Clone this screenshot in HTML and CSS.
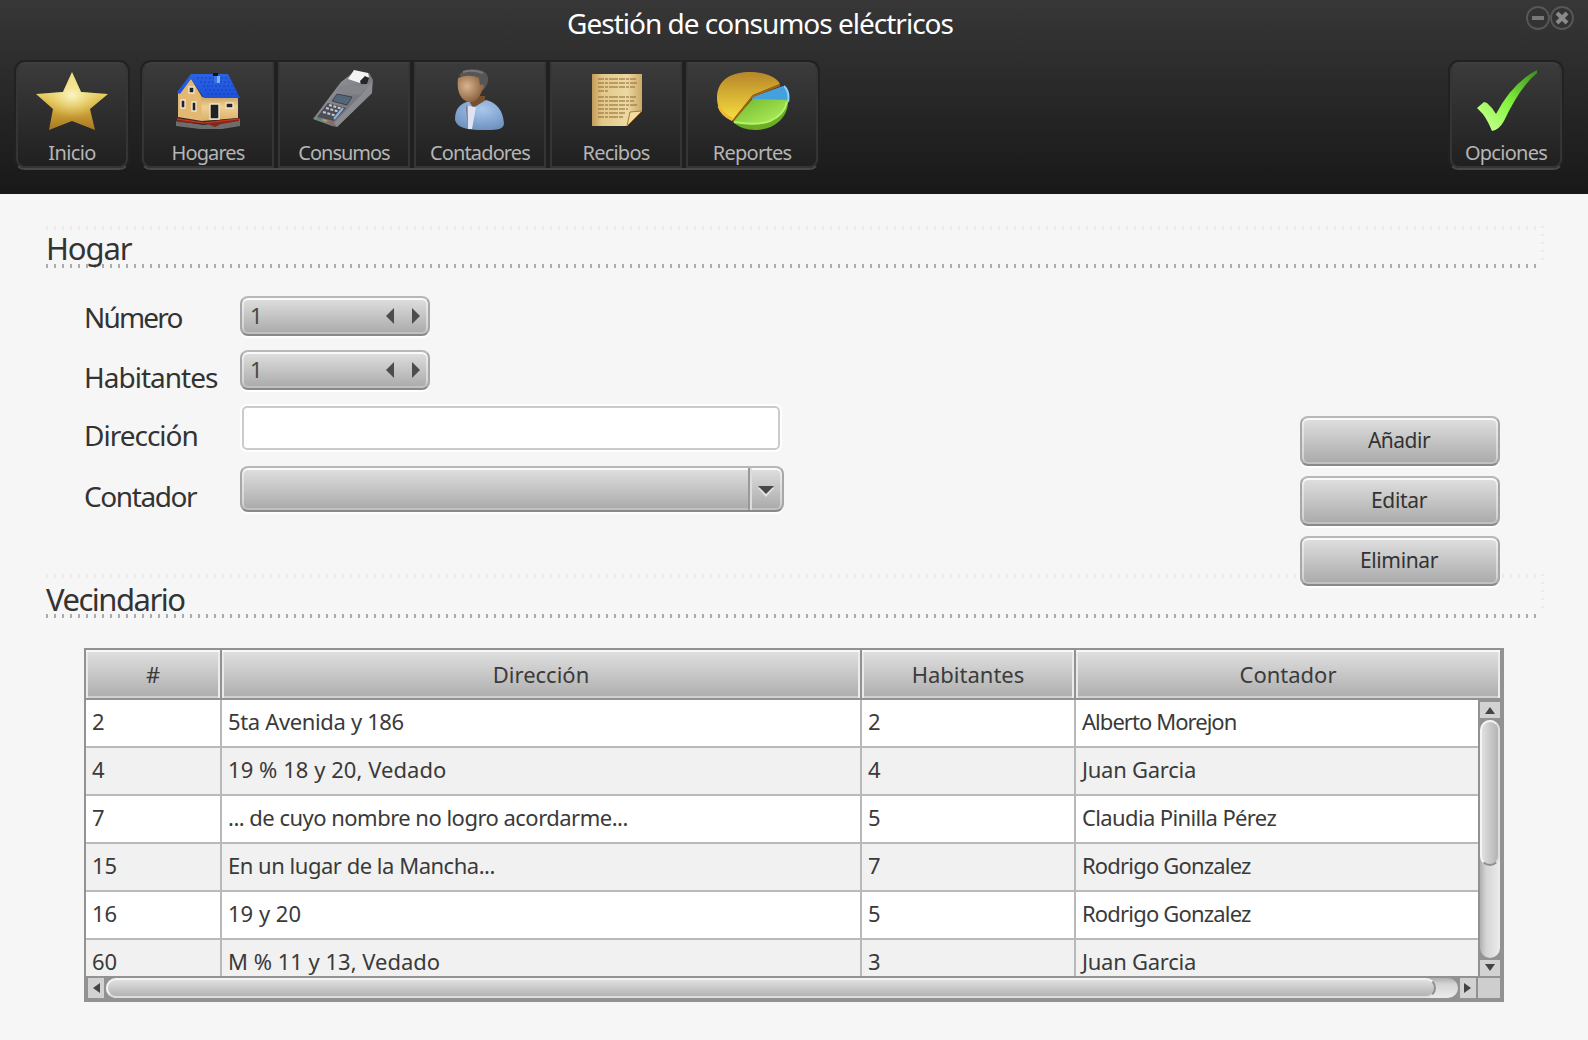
FILE: index.html
```html
<!DOCTYPE html>
<html lang="es">
<head>
<meta charset="utf-8">
<title>Gestión de consumos eléctricos</title>
<link rel="stylesheet" href="styles.css">
</head>
<body>
<header class="header">
  <div class="titlebar">
    <h1 class="title"><span class="t-title">Gestión de consumos eléctricos</span></h1>
    <svg class="controls" width="50" height="26" viewBox="0 0 50 26">
      <g fill="#333" stroke="#585858" stroke-width="1.8"><circle cx="13" cy="13" r="11"/><circle cx="37" cy="13" r="11"/></g>
      <path d="M7 13h12" stroke="#777" stroke-width="4"/>
      <path d="M32 8l10 10M42 8l-10 10" stroke="#8a8a8a" stroke-width="4"/>
    </svg>
  </div>
  <nav class="toolbar">
    <div class="group">
      <a class="tool tool-single">
        <svg width="76" height="66" viewBox="0 0 76 66">
          <defs><linearGradient id="gold" x2="0" y2="1"><stop offset="0" stop-color="#f0e48c"/><stop offset=".35" stop-color="#ecd56a"/><stop offset=".65" stop-color="#cfa638"/><stop offset="1" stop-color="#a97722"/></linearGradient>
          <radialGradient id="shine" cx=".5" cy=".4" r=".4"><stop offset="0" stop-color="#fbf5c4"/><stop offset="1" stop-color="#f3e080" stop-opacity="0"/></radialGradient></defs>
          <path d="M38 4L47 24L74 26L56 41L61 62L38 53L15 62L19 41L2 26L29 24Z" fill="url(#gold)"/>
          <path d="M38 4L47 24L74 26L56 41L61 62L38 53L15 62L19 41L2 26L29 24Z" fill="url(#shine)"/>
        </svg><span class="t-inicio">Inicio</span></a>
    </div>
    <div class="group group-main">
      <a class="tool"><svg width="76" height="66" viewBox="0 0 76 66">
        <defs><linearGradient id="wall" x2="0" y2="1"><stop offset="0" stop-color="#c9a464"/><stop offset=".4" stop-color="#efd092"/><stop offset="1" stop-color="#d9b06c"/></linearGradient><linearGradient id="roof" x2="0" y2="1"><stop offset="0" stop-color="#2b63e2"/><stop offset="1" stop-color="#1c50dc"/></linearGradient></defs>
        <path d="M6 53L34 57L70 51V58L52 61L30 61L6 58Z" fill="#8a8a8a" opacity=".7"/>
        <path d="M8 26L20 9L32 29V53L8 49Z" fill="#e2b873"/><path d="M31 29H68V50L32 53Z" fill="url(#wall)"/>
        <path d="M21 6H58L70 30H34L21 11L10 26L7 24Z" fill="url(#roof)"/>
        <path d="M27 10h32M30 14h32M33 18h31M35 22h31M37 26h31" stroke="#1540b8" stroke-width="1" stroke-dasharray="2 2"/>
        <path d="M43 5h5v3h-5z" fill="#111"/><path d="M44 8h3v7h-3z" fill="#3a72ea"/><path d="M47 8h3v7h-3z" fill="#7fb2f8"/>
        <path d="M19 19h5v6h-5zM11 32h4v8h-4zM22 34h4v9h-4zM40 36h9v15h-9zM56 35h7v5h-7z" fill="#222" stroke="#eee4cf" stroke-width="1.4"/>
        <path d="M7 50L34 54L69 50V53L51 56L45 59L38 56L7 54Z" fill="#8c2416"/><path d="M7 51L34 55L69 51" fill="none" stroke="#c03c2c" stroke-width="1"/>
      </svg><span class="t-hogares">Hogares</span></a>
      <a class="tool"><svg width="76" height="66" viewBox="0 0 76 66">
        <defs><linearGradient id="metal" x2="1" y2="1"><stop offset="0" stop-color="#a5a7ab"/><stop offset=".6" stop-color="#77797f"/><stop offset="1" stop-color="#55575c"/></linearGradient></defs>
        <path d="M35 14L48 4L63 5L67 12L66 25L31 59L26 58L7 51Z" fill="url(#metal)"/><path d="M66 13L66 25L31 59L28 55L56 26Z" fill="#8b8c92"/>
        <path d="M42 11L48 2L62 5L63 9L54 15Z" fill="#f3f3f3"/><path d="M54 13L59 8L63 10L61 16L55 16Z" fill="#222631"/>
        <path d="M35 17L54 18L64 15L54 27L30 23Z" fill="#84858b"/>
        <path d="M31 26L46 29L41 37L26 33Z" fill="#536779" stroke="#3d414a"/>
        <path d="M22 35L40 40L28 53L11 49Z" fill="#4b4e57"/>
        <path d="M23 37L37 41M20 40L34 44M17 44L31 48" stroke="#c7c9ce" stroke-width="2" stroke-dasharray="3 1.5"/><path d="M37 40L28 51" stroke="#8fb2d8" stroke-width="2"/>
        <path d="M11 50l4 1" stroke="#4b8b56" stroke-width="2"/><path d="M17 52l4 1" stroke="#b4a24b" stroke-width="2"/><path d="M23 54l4 1" stroke="#b85a45" stroke-width="2"/>
      </svg><span class="t-consumos">Consumos</span></a>
      <a class="tool"><svg width="76" height="66" viewBox="0 0 76 66">
        <defs><radialGradient id="face" cx=".35" cy=".4" r=".7"><stop offset="0" stop-color="#d9b38d"/><stop offset="1" stop-color="#805838"/></radialGradient><radialGradient id="shirt" cx=".55" cy=".3" r=".7"><stop offset="0" stop-color="#a9c8ed"/><stop offset="1" stop-color="#6f92c0"/></radialGradient></defs>
        <path d="M26 28H43V42H29Z" fill="#74502f"/>
        <path d="M13 52C13 40 18 36 27 33L31 40L44 32C55 35 61 42 62 56C61 63 50 62 40 62C26 62 15 60 13 52Z" fill="url(#shirt)"/>
        <path d="M26 38L34 39L30 61H26Z" fill="#dfe3f2"/><path d="M25 36L26 60L24 40Z" fill="#7c6f7d"/>
        <path d="M17 8C20 0 38 -1 44 5C47 9 47 16 42 21L31 10Z" fill="#565656"/>
        <path d="M16 10C22 7 31 7 37 10L38 17C42 14 44 20 40 23C37 31 32 35 27 34C20 33 14 25 16 10Z" fill="url(#face)"/>
        <path d="M21 4Q30 1 41 5" stroke="#777" stroke-width="2" fill="none"/>
      </svg><span class="t-contadores">Contadores</span></a>
      <a class="tool"><svg width="76" height="66" viewBox="0 0 76 66">
        <defs><linearGradient id="paper" x2="1"><stop offset="0" stop-color="#c29c5a"/><stop offset=".2" stop-color="#e2c888"/><stop offset=".7" stop-color="#ecd9a2"/><stop offset="1" stop-color="#cba968"/></linearGradient></defs>
        <path d="M14 6H64V43L49 58H14Z" fill="url(#paper)"/>
        <path d="M20 11h38M20 15h39M20 19h37M20 23h10M20 29h38M20 33h36M20 37h39M20 41h30M20 45h27M20 49h25" stroke="#9b7747" stroke-opacity=".8" stroke-width="1.5" stroke-dasharray="6 1 3 1 9 1"/>
        <path d="M49 58L52 44L64 43Z" fill="#f5dda0" stroke="#a87b3c"/>
      </svg><span class="t-recibos">Recibos</span></a>
      <a class="tool"><svg width="76" height="66" viewBox="0 0 76 66">
        <defs><linearGradient id="pie" x2="0" y2="1"><stop offset="0" stop-color="#b7852a"/><stop offset="1" stop-color="#f9e23f"/></linearGradient><linearGradient id="green" x2="1" y2="1"><stop offset="0" stop-color="#6eb52c"/><stop offset="1" stop-color="#b5f45f"/></linearGradient></defs>
        <path d="M40 29L74 32C75 50 59 62 42 62C32 62 24 59 19 54Z" fill="#6cad25"/>
        <path d="M39 31L73 31C73 46 58 56 43 56C32 57 24 55 19 53Z" fill="url(#green)"/>
        <path d="M20 54Q42 58 56 53Q70 47 73 34" fill="none" stroke="#b0f56a" stroke-width="2"/>
        <path d="M38 29L69 18Q76 24 74 32L38 31Z" fill="#45a1dd"/><path d="M70 18Q76 24 74 34" stroke="#8dd2fa" stroke-width="2" fill="none"/>
        <path d="M3 30C3 10 20 4 36 4C51 4 63 9 66 16L39 27L18 53C8 48 3 40 3 30Z" fill="url(#pie)"/>
        <path d="M19 53L39 28L66 17" fill="none" stroke="#a4630f" stroke-width="2"/><path d="M5 38Q8 47 18 51" stroke="#f4b63a" stroke-width="3" fill="none"/>
      </svg><span class="t-reportes">Reportes</span></a>
    </div>
    <div class="group group-end">
      <a class="tool tool-single"><svg width="76" height="66" viewBox="0 0 76 66">
        <defs><linearGradient id="check" x1="0" y1="1" x2="1" y2="0"><stop offset="0" stop-color="#caff9d"/><stop offset=".2" stop-color="#b5ff79"/><stop offset=".5" stop-color="#83f23d"/><stop offset="1" stop-color="#3d8a20"/></linearGradient></defs>
        <path d="M9 40L16 34L19 35Q24 39 28 46Q44 15 69 2V5Q52 19 36 53Q31 62 24 63Q18 48 11 42Z" fill="url(#check)"/>
      </svg><span class="t-opciones">Opciones</span></a>
    </div>
  </nav>
</header>
<main class="content">
  <section class="hogar">
    <h2 class="legend"><span class="t-hogar">Hogar</span></h2>
    <div class="form-area">
      <form class="form">
        <label class="l1"><span class="t-numero">Número</span></label>
        <div class="glossy spinner"><span>1</span><svg width="36" height="16" viewBox="0 0 36 16"><path d="M9 0V16L1 8ZM27 0V16L35 8Z" fill="#4c4c4c"/></svg></div>
        <label class="l2"><span class="t-habitantes">Habitantes</span></label>
        <div class="glossy spinner"><span>1</span><svg width="36" height="16" viewBox="0 0 36 16"><path d="M9 0V16L1 8ZM27 0V16L35 8Z" fill="#4c4c4c"/></svg></div>
        <label class="l3"><span class="t-direccion">Dirección</span></label>
        <input class="field" type="text" aria-label="Dirección">
        <label class="l4"><span class="t-contador">Contador</span></label>
        <div class="glossy combo"><span class="arrow"><svg width="16" height="12" viewBox="0 0 16 12"><path d="M0 3H16L8 12Z" fill="#e4e4e4"/><path d="M0 1H16L8 9Z" fill="#484848"/></svg></span></div>
      </form>
      <div class="actions">
        <button class="glossy"><span class="t-anadir">Añadir</span></button>
        <button class="glossy"><span class="t-editar">Editar</span></button>
        <button class="glossy"><span class="t-eliminar">Eliminar</span></button>
      </div>
    </div>
  </section>
  <section class="vecindario">
    <h2 class="legend"><span class="t-vecindario">Vecindario</span></h2>
    <div class="table">
      <div class="row head"><div>#</div><div><span>Dirección</span></div><div><span>Habitantes</span></div><div><span>Contador</span></div></div>
      <div class="body">
        <div class="rows">
          <div class="row"><div>2</div><div><span class="d1">5ta Avenida y 186</span></div><div>2</div><div><span class="c1">Alberto Morejon</span></div></div>
          <div class="row"><div>4</div><div><span class="d2">19 % 18 y 20, Vedado</span></div><div>4</div><div><span class="c2">Juan Garcia</span></div></div>
          <div class="row"><div>7</div><div><span class="d3">... de cuyo nombre no logro acordarme...</span></div><div>5</div><div><span class="c3">Claudia Pinilla Pérez</span></div></div>
          <div class="row"><div>15</div><div><span class="d4">En un lugar de la Mancha...</span></div><div>7</div><div><span class="c4">Rodrigo Gonzalez</span></div></div>
          <div class="row"><div>16</div><div><span class="d5">19 y 20</span></div><div>5</div><div><span class="c4">Rodrigo Gonzalez</span></div></div>
          <div class="row"><div>60</div><div><span class="d6">M % 11 y 13, Vedado</span></div><div>3</div><div><span class="c2">Juan Garcia</span></div></div>
        </div>
        <div class="vbar">
          <span class="step"><svg width="12" height="8" viewBox="0 0 12 8"><path d="M1 8L6 1L11 8Z" fill="#444"/></svg></span>
          <div class="track"><div class="thumb"></div></div>
          <span class="step"><svg width="12" height="8" viewBox="0 0 12 8"><path d="M1 0L6 7L11 0Z" fill="#444"/></svg></span>
        </div>
      </div>
      <div class="hbar">
        <span class="step"><svg width="8" height="12" viewBox="0 0 8 12"><path d="M8 1L1 6L8 11Z" fill="#444"/></svg></span>
        <div class="track"><div class="thumb"></div></div>
        <span class="step"><svg width="8" height="12" viewBox="0 0 8 12"><path d="M0 1L7 6L0 11Z" fill="#444"/></svg></span>
        <span class="corner"></span>
      </div>
    </div>
  </section>
</main>
</body>
</html>
```
FILE: styles.css
```css
* { box-sizing: border-box; }
body { margin: 0; width: 1588px; height: 1040px; overflow: hidden; background: #f6f6f6; color: #333; font: 22px/26px "Noto Sans", "Open Sans", sans-serif; }
h1, h2 { margin: 0; font-weight: 400; }
svg { display: block; }
span { white-space: nowrap; }

.header { height: 194px; background: linear-gradient(#373737, #181818); }
.titlebar { height: 60px; display: grid; grid-template-columns: 1525px 50px; align-items: start; }
.title { padding: 3px 5px 0 0; font-size: 28px; line-height: 40px; color: #fff; text-align: center; }
.controls { margin-top: 5px; }
.toolbar { display: flex; padding: 0 24px 0 14px; }
.group { display: flex; height: 110px; border: 2px solid #212121; border-bottom-color: #484848; border-radius: 11px; }
.group-main { margin-left: 10px; gap: 4px; background: #202020; }
.group-end { margin-left: auto; }
.tool { width: 132px; display: flex; flex-direction: column; align-items: center; padding-top: 4px; color: #b5b5b5; font-size: 20px; background: linear-gradient(#3b3b3b, #202020); border: 2px solid #353535; border-top-color: #3e3e3e; }
.tool-single { width: 112px; border-radius: 9px; }
.group-main .tool:first-child { border-radius: 9px 0 0 9px; }
.group-main .tool:last-child { border-radius: 0 9px 9px 0; }
.tool span { margin-top: 6px; }

.content { padding: 32px 44px 0 46px; }
.legend { height: 43px; padding-top: 2px; font-size: 31px; line-height: 40px; color: #333;
  background:
    repeating-linear-gradient(90deg, #acacac 0 2px, transparent 2px 8px) 0 38px / 1490px 4px no-repeat,
    repeating-linear-gradient(90deg, #ebebeb 0 2px, transparent 2px 8px) 0 0 / 1494px 4px no-repeat,
    repeating-linear-gradient(#ebebeb 0 2px, transparent 2px 8px) 1495px 0 / 3px 40px no-repeat; }
.hogar { height: 348px; }
.form-area { display: flex; justify-content: space-between; padding: 27px 44px 0 38px; }
.form { display: grid; grid-template-columns: 156px 544px; grid-template-rows: 54px 54px 62px 46px; align-items: start; }
label { font-size: 28px; line-height: 38px; }
.l1 { padding-top: 2px; } .l2 { padding-top: 8px; } .l3 { padding-top: 12px; } .l4 { padding-top: 11px; }
.glossy { border: 2px solid; border-color: #b8b8b8 #a8a8a8 #898989; border-radius: 8px; background: linear-gradient(#e0e0e0, #a9a9a9); box-shadow: inset 0 2px 0 #fafafa, inset 0 -2px 0 #c0c0c0, inset 2px 0 0 #ffffff70, inset -2px 0 0 #ffffff70, 0 2px 0 #fff; color: #333; }
.spinner { width: 190px; height: 40px; display: flex; align-items: center; justify-content: space-between; padding: 0 7px 0 8px; color: #484848; }
.spinner span { margin-top: -2px; }
.field { margin: 2px 0 0 2px; width: 538px; height: 44px; border: 2px solid #cbcbcb; border-radius: 5px; background: #fff; box-shadow: 0 0 0 2px #fff; }
.combo { height: 46px; display: flex; justify-content: flex-end; }
.arrow { width: 34px; padding-top: 3px; display: flex; align-items: center; justify-content: center; border-left: 2px solid #999; box-shadow: inset 2px 0 0 #ddd; }
.actions { display: grid; grid-auto-rows: 50px; gap: 10px; padding-top: 120px; }
.actions button { width: 200px; padding: 0 2px 2px 0; font: 21px/26px "Noto Sans", sans-serif; }

.vecindario .legend { height: 44px; padding-top: 2px; background-position: 0 40px, 0 0, 1495px 0; line-height: 46px; }
.table { margin: 30px 0 0 38px; width: 1420px; height: 354px; border: 2px solid #929292; border-width: 2px 4px 4px 2px; background: #929292; }
.row { display: grid; grid-template-columns: 134px 638px 212px 1fr; column-gap: 2px; height: 46px; background: #b9b9b9; }
.head { height: 50px; background: #929292; padding-bottom: 2px; }
.head > div { display: flex; align-items: center; justify-content: center; background: linear-gradient(#e1e1e1, #adadad); box-shadow: inset 0 2px #f8f8f8, inset 2px 0 #e9e9e9, inset -2px 0 #ececec, inset 0 -2px #d0d0d0; color: #3b3b3b; }
.body { display: flex; gap: 2px; height: 276px; }
.rows { width: 1392px; display: grid; grid-auto-rows: 46px; row-gap: 2px; overflow: hidden; background: #b9b9b9; }
.rows .row > div { background: #fff; padding: 8px 0 0 6px; color: #3a3a3a; }
.rows .row:nth-child(even) > div { background: #f1f1f1; }
.vbar { width: 20px; padding-top: 2px; display: flex; flex-direction: column; gap: 2px; }
.step { display: flex; align-items: center; justify-content: center; background: #d2d2d2; }
.vbar .step { height: 16px; }
.track { flex: 1; background: linear-gradient(90deg, #b0b0b0, #d4d4d4 30%, #ececec); border-radius: 10px; }
.vbar .thumb { height: 146px; border: 2px solid; border-color: #f4f4f4 #dedede #8f8f8f #f4f4f4; border-radius: 10px; background: linear-gradient(90deg, #e0e0e0, #b3b3b3); }
.hbar { display: flex; height: 22px; padding: 2px 0 0 2px; gap: 2px; }
.hbar .step { width: 16px; }
.hbar .track { background: linear-gradient(#b0b0b0, #d4d4d4 30%, #ececec); }
.hbar .thumb { height: 20px; width: 1330px; border: 2px solid; border-color: #f4f4f4 #8f8f8f #dedede #f4f4f4; border-radius: 10px; background: linear-gradient(#e0e0e0, #b3b3b3); }
.corner { width: 22px; background: #cecece; }

/* Tracking per label */
.t-title { letter-spacing: -1px; }
.t-inicio { letter-spacing: -.6px; }
.t-hogares { letter-spacing: -.9px; }
.t-consumos { letter-spacing: -1px; }
.t-contadores { letter-spacing: -.87px; }
.t-recibos { letter-spacing: -.78px; }
.t-reportes, .t-opciones { letter-spacing: -.73px; }
.t-hogar { letter-spacing: -1.1px; }
.t-vecindario { letter-spacing: -1.5px; }
.t-numero { letter-spacing: -1.8px; }
.t-habitantes, .t-direccion { letter-spacing: -1px; }
.t-contador { letter-spacing: -1.4px; }
.t-anadir { letter-spacing: -.5px; }
.t-editar, .t-eliminar { letter-spacing: -.35px; }
.d1 { letter-spacing: -.35px; }
.d2 { letter-spacing: .05px; }
.d3 { letter-spacing: -.52px; }
.d4 { letter-spacing: -.48px; }
.c1 { letter-spacing: -.95px; }
.c2 { letter-spacing: -.25px; }
.c3 { letter-spacing: -.63px; }
.c4 { letter-spacing: -.82px; }
```
